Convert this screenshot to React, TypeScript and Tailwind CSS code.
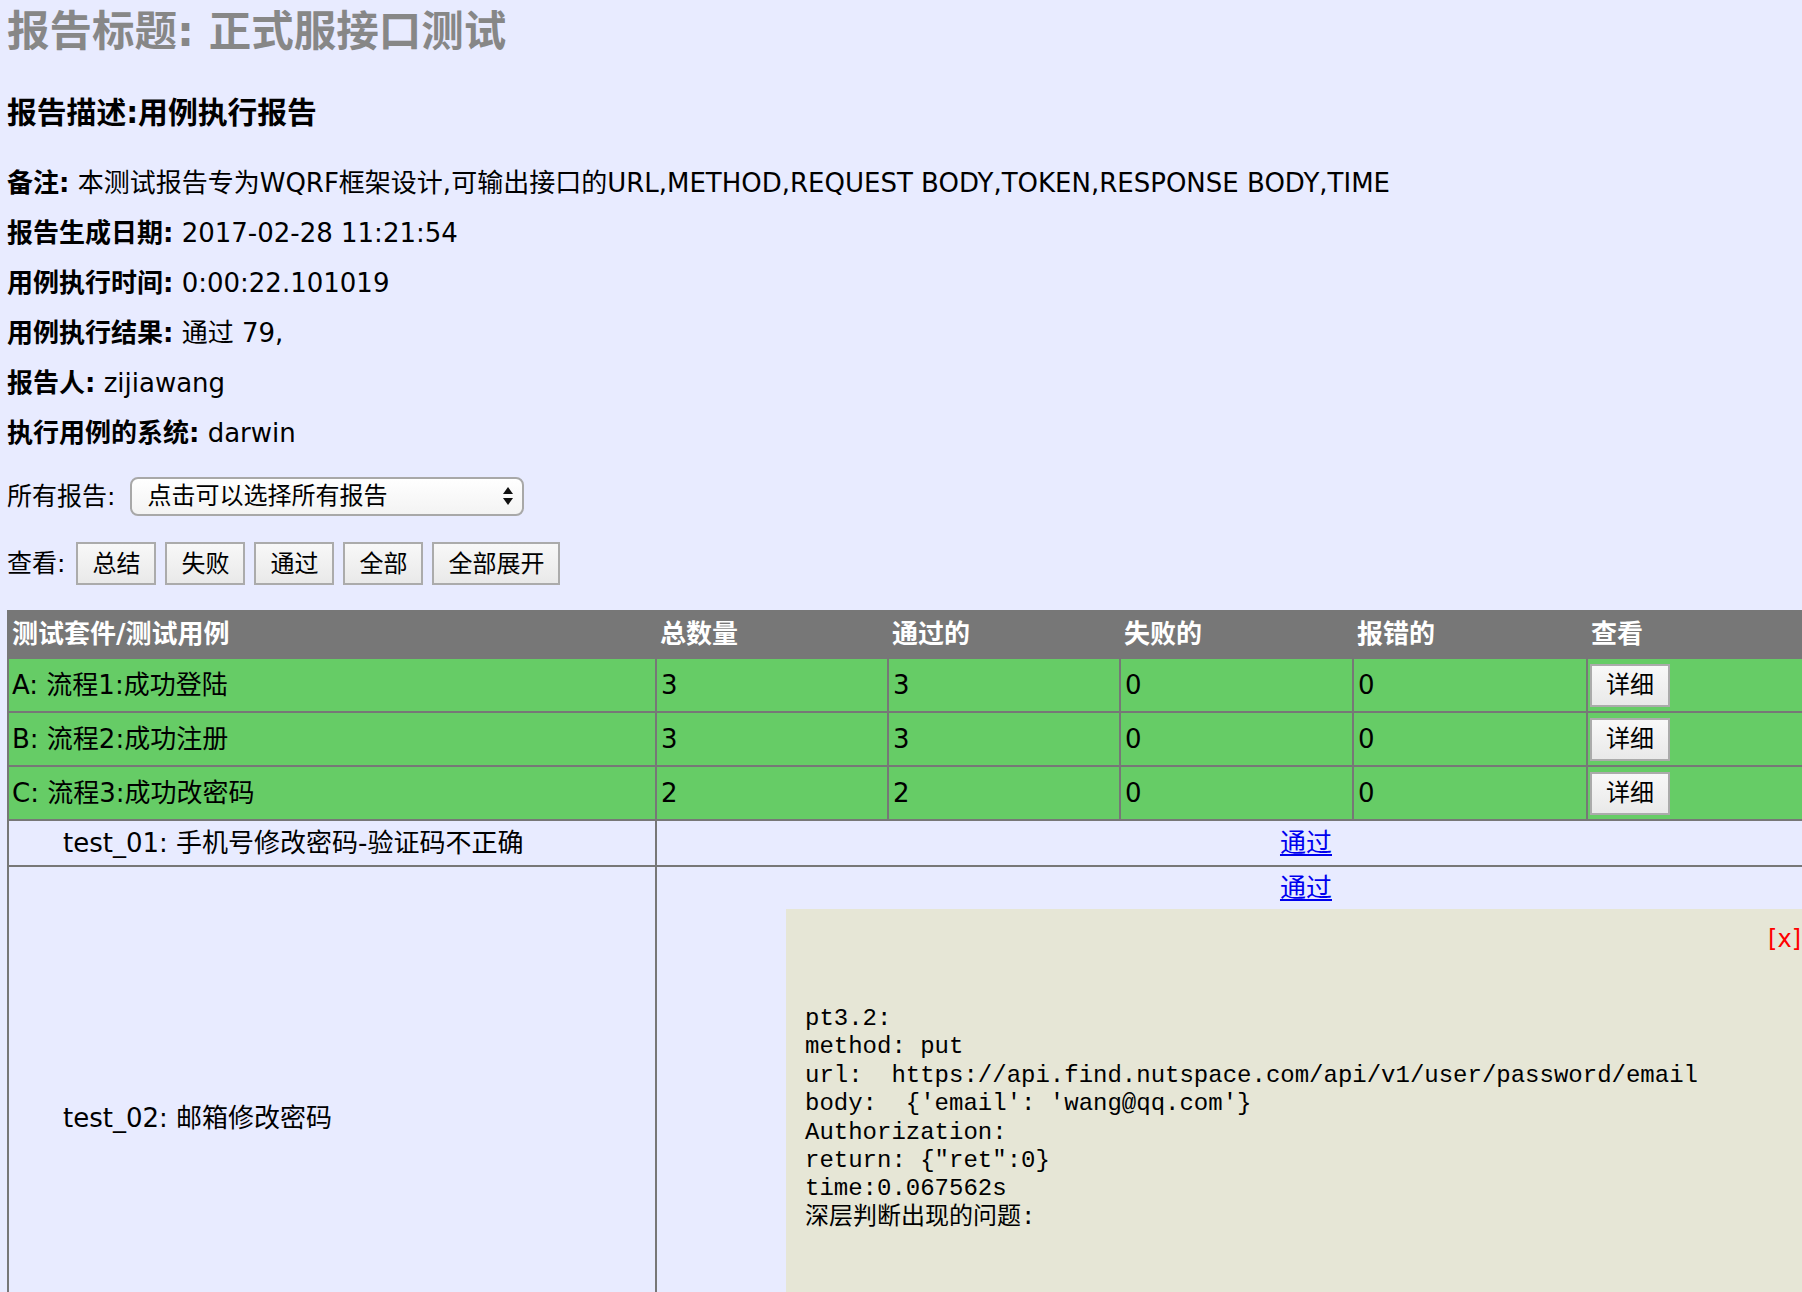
import React from 'react';

const suites = [
  { name: 'A: 流程1:成功登陆', total: 3, pass: 3, fail: 0, error: 0 },
  { name: 'B: 流程2:成功注册', total: 3, pass: 3, fail: 0, error: 0 },
  { name: 'C: 流程3:成功改密码', total: 2, pass: 2, fail: 0, error: 0 },
];

const infoLines = [
  { label: '备注:', value: '本测试报告专为WQRF框架设计,可输出接口的URL,METHOD,REQUEST BODY,TOKEN,RESPONSE BODY,TIME' },
  { label: '报告生成日期:', value: '2017-02-28 11:21:54' },
  { label: '用例执行时间:', value: '0:00:22.101019' },
  { label: '用例执行结果:', value: '通过 79,' },
  { label: '报告人:', value: 'zijiawang' },
  { label: '执行用例的系统:', value: 'darwin' },
];

const detailLines = [
  'pt3.2:',
  'method: put',
  'url:  https://api.find.nutspace.com/api/v1/user/password/email',
  "body:  {'email': 'wang@qq.com'}",
  'Authorization:',
  'return: {"ret":0}',
  'time:0.067562s',
  '深层判断出现的问题:',
];

const GrayButton: React.FC<{ label: string; className?: string }> = ({ label, className = '' }) => (
  <button
    className={`h-[43px] px-[14px] border-2 border-[#ababab] bg-gradient-to-b from-[#f8f8f8] to-[#e9e9e9] text-[24px] leading-none text-black ${className}`}
  >
    {label}
  </button>
);

const App: React.FC = () => {
  return (
    <div className="w-[1802px] min-h-[1292px] overflow-hidden bg-[#e8ebff] text-black font-['DejaVu_Sans','Noto_Sans_CJK_SC',sans-serif]">
      <div className="pl-[7px]">
        <h1 className="pt-[7px] text-[42.5px] leading-[50px] font-bold text-[#878787] whitespace-nowrap">
          报告标题: 正式服接口测试
        </h1>
        <h3 className="mt-[38px] text-[29.8px] leading-[36px] font-bold whitespace-nowrap">报告描述:用例执行报告</h3>

        <div className="mt-[27px]">
          {infoLines.map((line) => (
            <p key={line.label} className="text-[26px] leading-[50px] whitespace-nowrap">
              <strong className="font-bold">{line.label}</strong> {line.value}
            </p>
          ))}
        </div>

        <div className="mt-[19px] flex items-center h-[38px]">
          <span className="text-[25px] leading-none">所有报告:</span>
          <div className="ml-[15px] w-[394px] h-[39px] rounded-[8px] border-2 border-[#a8a8a8] bg-gradient-to-b from-white to-[#f3f3f3] flex items-center pl-[15px] pr-[8px]">
            <span className="text-[24px] leading-none flex-1">点击可以选择所有报告</span>
            <svg width="12" height="20" viewBox="0 0 12 20">
              <path d="M6 1 L11 8 L1 8 Z" fill="#111" />
              <path d="M6 19 L11 12 L1 12 Z" fill="#111" />
            </svg>
          </div>
        </div>

        <div className="mt-[27px] flex items-center gap-[9px]">
          <span className="text-[25px] leading-none mr-[2px]">查看:</span>
          <GrayButton label="总结" />
          <GrayButton label="失败" />
          <GrayButton label="通过" />
          <GrayButton label="全部" />
          <GrayButton label="全部展开" />
        </div>

        <table className="mt-[25px] w-[1948px] table-fixed border-collapse text-[26px]">
          <colgroup>
            <col className="w-[648px]" />
            <col className="w-[232px]" />
            <col className="w-[232px]" />
            <col className="w-[233px]" />
            <col className="w-[234px]" />
            <col className="w-[369px]" />
          </colgroup>
          <thead>
            <tr className="bg-[#777777] text-white font-bold">
              {['测试套件/测试用例', '总数量', '通过的', '失败的', '报错的', '查看'].map((h) => (
                <td key={h} className="h-[47px] border-2 border-[#777777] px-[3px] text-left align-middle whitespace-nowrap">
                  {h}
                </td>
              ))}
            </tr>
          </thead>
          <tbody>
            {suites.map((s) => (
              <tr key={s.name} className="bg-[#66cc66]">
                <td className="h-[54px] border-2 border-[#777777] px-[3px] whitespace-nowrap">{s.name}</td>
                <td className="border-2 border-[#777777] px-[4px]">{s.total}</td>
                <td className="border-2 border-[#777777] px-[4px]">{s.pass}</td>
                <td className="border-2 border-[#777777] px-[4px]">{s.fail}</td>
                <td className="border-2 border-[#777777] px-[4px]">{s.error}</td>
                <td className="border-2 border-[#777777] px-[2px]">
                  <GrayButton label="详细" className="w-[80px] px-0" />
                </td>
              </tr>
            ))}
            <tr>
              <td className="h-[46px] border-2 border-[#777777] pl-[54px] whitespace-nowrap">test_01: 手机号修改密码-验证码不正确</td>
              <td colSpan={5} className="border-2 border-[#777777] text-center">
                <a href="#" className="text-[#0000ee] underline">通过</a>
              </td>
            </tr>
            <tr>
              <td className="border-2 border-[#777777] pl-[54px] align-middle whitespace-nowrap">test_02: 邮箱修改密码</td>
              <td colSpan={5} className="border-2 border-[#777777] align-top p-0 pb-[8px]">
                <div className="text-center leading-[42px]">
                  <a href="#" className="text-[#0000ee] underline">通过</a>
                </div>
                <div className="ml-[129px] w-[1025px] bg-[#e6e6d6] pt-[15px] pb-[130px] pl-[19px] pr-[10px]">
                  <div className="text-right text-[24px] leading-[30px] text-[#ff0000]">[x]</div>
                  <pre className="mt-[51px] text-[24px] leading-[28.4px] font-['Liberation_Mono','Noto_Sans_CJK_SC',monospace]">
                    {detailLines.join('\n')}
                  </pre>
                </div>
              </td>
            </tr>
          </tbody>
        </table>
      </div>
    </div>
  );
};

export default App;
